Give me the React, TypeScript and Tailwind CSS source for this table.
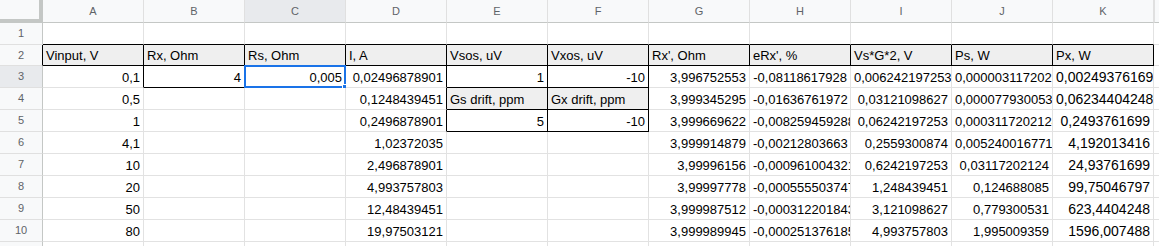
const COLS = ['A', 'B', 'C', 'D', 'E', 'F', 'G', 'H', 'I', 'J', 'K']

// sheet rows 1..10, 11 columns each
const DATA: string[][] = [
  [],
  ['Vinput, V', 'Rx, Ohm', 'Rs, Ohm', 'I, A', 'Vsos, uV', 'Vxos, uV', "Rx', Ohm", "eRx', %", 'Vs*G*2, V', 'Ps, W', 'Px, W'],
  ['0,1', '4', '0,005', '0,02496878901', '1', '-10', '3,996752553', '-0,08118617928', '0,006242197253', '0,000003117202124', '0,002493761699'],
  ['0,5', '', '', '0,1248439451', 'Gs drift, ppm', 'Gx drift, ppm', '3,999345295', '-0,01636761972', '0,03121098627', '0,00007793005312', '0,06234404248'],
  ['1', '', '', '0,2496878901', '5', '-10', '3,999669622', '-0,008259459288', '0,06242197253', '0,0003117202124', '0,2493761699'],
  ['4,1', '', '', '1,02372035', '', '', '3,999914879', '-0,00212803663', '0,2559300874', '0,005240016771', '4,192013416'],
  ['10', '', '', '2,496878901', '', '', '3,99996156', '-0,0009610043215', '0,6242197253', '0,03117202124', '24,93761699'],
  ['20', '', '', '4,993757803', '', '', '3,99997778', '-0,0005555037475', '1,248439451', '0,124688085', '99,75046797'],
  ['50', '', '', '12,48439451', '', '', '3,999987512', '-0,0003122018431', '3,121098627', '0,779300531', '623,4404248'],
  ['80', '', '', '19,97503121', '', '', '3,999989945', '-0,0002513761853', '4,993757803', '1,995009359', '1596,007488'],
]

// cells with a black box round them
const BOXED = new Set([
  ...COLS.map((_, c) => `2,${c}`),
  '3,1', '3,4', '3,5', '4,4', '4,5', '5,4', '5,5',
])
const FILLED = new Set([...COLS.map((_, c) => `2,${c}`), '4,4', '4,5'])

const boxed = (r: number, c: number) => BOXED.has(`${r},${c}`)
const isNum = (s: string) => /^-?[\d,]+$/.test(s)

function Cell({ r, c }: { r: number; c: number }) {
  const value = DATA[r - 1]?.[c] ?? ''
  const right = boxed(r, c) || boxed(r, c + 1)
  const bottom = boxed(r, c) || boxed(r + 1, c)
  const selected = r === 3 && c === 2

  return (
    <div
      className={`relative flex items-end border-r border-b ${right ? 'border-r-black' : 'border-r-[#e2e2e2]'} ${
        bottom ? 'border-b-black' : 'border-b-[#e2e2e2]'
      } ${FILLED.has(`${r},${c}`) ? 'bg-[#efefef]' : 'bg-white'}`}
    >
      <div
        className={`w-full overflow-hidden whitespace-nowrap px-[3px] pb-px leading-[17px] ${
          isNum(value) ? 'text-right' : 'text-left'
        } ${c === 10 && r >= 3 ? 'text-[14px]' : ''}`}
      >
        {value}
      </div>
      {selected && (
        <>
          <div className="absolute -left-px -top-px -right-px -bottom-px border-2 border-[#1a73e8]" />
          <div className="absolute -right-[4px] -bottom-[4px] h-[7px] w-[7px] border border-white bg-[#1a73e8]" />
        </>
      )}
    </div>
  )
}

export default function App() {
  const rows = [1, 2, 3, 4, 5, 6, 7, 8, 9, 10, 11]

  return (
    <div className="h-[246px] w-[1159px] overflow-hidden bg-white font-['Liberation_Sans',Arial,sans-serif] text-[13px] text-black">
      <div className="grid grid-cols-[43px_repeat(11,101px)_1fr] grid-rows-[23px_22px_21px_repeat(9,22px)]">
        {/* corner */}
        <div className="border-r-[4px] border-b-[4px] border-[#c4c7c5] bg-[#f8f9fa]" />
        {COLS.map((col, c) => (
          <div
            key={col}
            className={`flex items-center justify-center border-r border-b border-r-[#e0e0e0] border-b-[#c4c7c5] text-[11px] text-[#5f6368] ${
              c === 2 ? 'bg-[#e8eaed]' : 'bg-[#f8f9fa]'
            }`}
          >
            {col}
          </div>
        ))}
        <div className="border-b border-b-[#c4c7c5] border-l border-l-[#e0e0e0] bg-[#f8f9fa]" />

        {rows.map((r) => (
          <div key={r} className="contents">
            <div
              className={`flex items-center justify-center border-r border-b border-b-[#e0e0e0] text-[11px] text-[#5f6368] ${
                boxed(r, 0) ? 'border-r-black' : 'border-r-[#c4c7c5]'
              } ${r === 3 ? 'bg-[#e8eaed]' : 'bg-[#f8f9fa]'}`}
            >
              {r}
            </div>
            {COLS.map((col, c) => (
              <Cell key={col} r={r} c={c} />
            ))}
            <div className="border-b border-b-[#e2e2e2] bg-white" />
          </div>
        ))}
      </div>
    </div>
  )
}
